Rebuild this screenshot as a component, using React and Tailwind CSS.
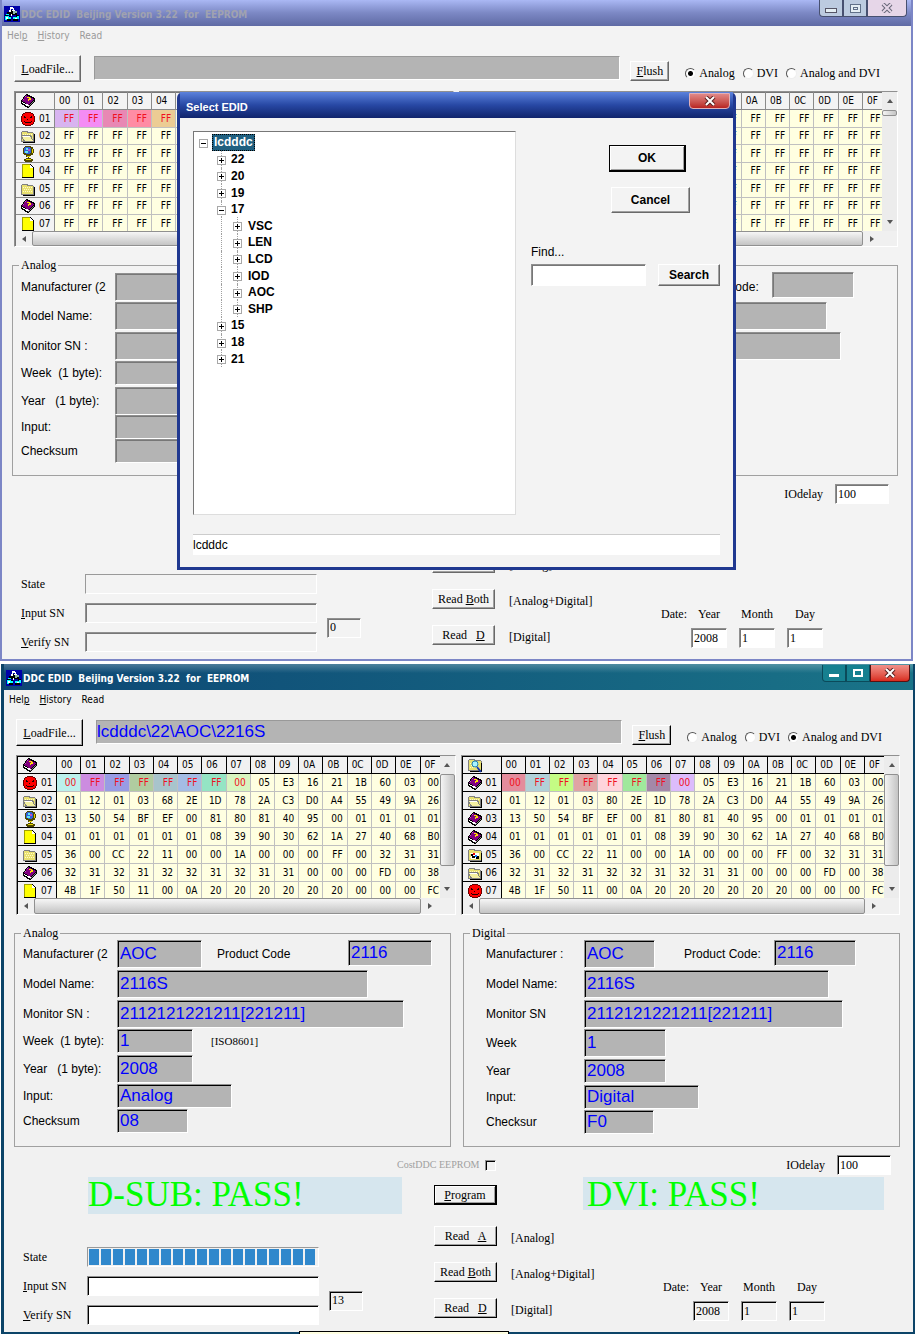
import clsx from 'clsx';

const SERIF = "font-['Liberation_Serif',serif] text-xs leading-3";
const UI = "font-['DejaVu_Sans_Condensed','DejaVu_Sans',sans-serif] text-[10px]";

const COLUMNS = ['00', '01', '02', '03', '04', '05', '06', '07', '08', '09', '0A', '0B', '0C', '0D', '0E', '0F'];

const EMPTY_ROWS = Array(7).fill(Array(16).fill('FF').join(' '));

const ANALOG_ROWS = [
    '00 FF FF FF FF FF FF 00 05 E3 16 21 1B 60 03 00',
    '01 12 01 03 68 2E 1D 78 2A C3 D0 A4 55 49 9A 26',
    '13 50 54 BF EF 00 81 80 81 40 95 00 01 01 01 01',
    '01 01 01 01 01 01 08 39 90 30 62 1A 27 40 68 B0',
    '36 00 CC 22 11 00 00 1A 00 00 00 FF 00 32 31 31',
    '32 31 32 31 32 32 31 32 31 31 00 00 00 FD 00 38',
    '4B 1F 50 11 00 0A 20 20 20 20 20 20 00 00 00 FC',
];

const DIGITAL_ROWS = ANALOG_ROWS.map((row, i) => (i === 1 ? row.replace('68', '80') : row));

/* ---------- icons ---------- */

function Svg({ children, className = 'size-4', box = '0 0 16 16' }) {
    return (
        <svg viewBox={box} className={clsx('block shrink-0', className)} shapeRendering="crispEdges" aria-hidden="true">
            {children}
        </svg>
    );
}

function AppIcon() {
    return (
        <Svg>
            <rect width="16" height="16" fill="#0000a8" />
            <path d="M6 4h4v2h3v3h2v3h-3V9H4v3H1V9h2V6h3z" fill="#000" />
            <path d="M6 1h3v1h1v2H9V3H7v1H6zM5 4h2v2H5zM8 4h3v1H8z" fill="#fff" />
            <path d="M9 5h4v2h-2v1H9z" fill="#8fb8a8" />
            <path d="M2 8h3v1H2zM1 10h4v1h2v2H5v1H1zM9 11h4v-1h2v3h-2v1H9z" fill="#0ff" />
            <path d="M2 11h2v2H2zM11 12h2v1h-2zM7 8h1v2H7z" fill="#fff" />
            <path d="M3 13h4v2H3zM9 13h5v2H9zM5 10h2v1H5z" fill="#000" />
        </Svg>
    );
}

function Book() {
    return (
        <Svg>
            <path d="M6 1h1l8 4v3l-6 7H8L1 11V8z" fill="#000" />
            <path d="M6 2l8 4-5 6-7-4z" fill="#800080" />
            <path d="M9 12l5-5v1l-5 6-7-4V9z" fill="#fff" />
            <path d="M8 13h1l5-6v1l-5 6H8z" fill="#808080" />
            <path d="M7 4h3v1h1v2H9v1H8V6h1V5H7z" fill="#ffe000" />
            <path d="M5 3h1v1H5zM3 6h1v1H3z" fill="#c060c0" />
        </Svg>
    );
}

function Face() {
    return (
        <Svg>
            <path d="M5 1h6v1h2v1h1v2h1v6h-1v2h-1v1h-2v1H5v-1H3v-1H2v-2H1V5h1V3h1V2h2z" fill="#600" />
            <path d="M5 2h6v1h2v2h1v6h-1v2h-2v1H5v-1H3v-2H2V5h1V3h2z" fill="#f00" />
            <path d="M4 5h1v1h1v1H4zM10 6h1V5h1v2h-2zM7 8h1v1H7zM5 11h6v1H5zM4 10h1v1H4zM11 10h1v1h-1z" fill="#200" />
        </Svg>
    );
}

function Folder({ open, badge }) {
    return (
        <Svg>
            <path d={badge ? 'M2 2h5l1 1h6v1h1v10H1V3h1z' : 'M2 3h5l1 1h5v1h1v9H1V4h1z'} fill="#808080" />
            <path d={badge ? 'M2 3h5v1h7v9H2z' : 'M2 4h5v1h6v8H2z'} fill="#e8e070" />
            <path d="M3 6h1v1H3zM5 6h1v1H5zM7 6h1v1H7zM9 6h1v1H9zM11 6h1v1h-1zM4 8h1v1H4zM6 8h1v1H6zM8 8h1v1H8zM10 8h1v1h-1zM3 10h1v1H3zM5 10h1v1H5zM7 10h1v1H7zM9 10h1v1H9zM11 10h1v1h-1z" fill="#fffbc8" />
            <path d="M14 6h1v9H3v-1h11z" fill="#000" />
            {open && (
                <>
                    <path d="M1 7h10l3 7H4z" fill="#808080" />
                    <path d="M2 8h8l3 5H5z" fill="#f4f0a0" />
                    <path d="M2 8h8v1H3z" fill="#fff" />
                </>
            )}
            {badge === 'find' && (
                <g shapeRendering="auto">
                    <circle cx="8" cy="7" r="3" fill="#a8f4ff" stroke="#2080b0" />
                    <path d="M10 10l4 5" stroke="#1838a8" strokeWidth="2" />
                </g>
            )}
            {badge === 'picture' && (
                <>
                    <path d="M4 6h8v6H4z" fill="#fff" />
                    <path d="M4 7h2v2h2v2H5zM9 9h3v3H9z" fill="#000" />
                    <path d="M6 6h2v2H6z" fill="#e00" />
                    <path d="M8 8h2v2H8z" fill="#0080ff" />
                </>
            )}
        </Svg>
    );
}

function Globe() {
    return (
        <Svg>
            <path d="M5 0h6v1h2v2h1v4h-1v2h-2v1h-1v1H9v1h2v1h2v2h-1v1H5v-1H4v-2h2v-1h2v-1H6V9H4V8H3V2h1V1h1z" fill="#504800" />
            <path d="M6 13h5v1H6zM12 3h1v4h-1zM7 10h3v1H7z" fill="#e8d800" />
            <path d="M5 1h5v1h1v5h-1v1H6V7H4V2h1z" fill="#3060d8" />
            <path d="M6 2h2v2H6zM5 5h3v2H5z" fill="#60e8f0" />
            <path d="M8 3h2v2H8z" fill="#c050c0" />
        </Svg>
    );
}

function Page() {
    return (
        <Svg>
            <path d="M2 1h9v1h1v1h1v1h1v11H2z" fill="#000" />
            <path d="M2 1h8v4h3v9H2z" fill="#ff0" />
            <path d="M10 2h1v1h1v1h1v1h-3z" fill="#fff" />
            <path d="M2 1h1v13H2zM2 1h8v1H2z" fill="#a0a000" />
        </Svg>
    );
}

const ANALOG_ICONS = [
    <Book />, <Face />, <Folder open />, <Globe />, <Page />, <Folder />, <Book />, <Page />,
];
const DIGITAL_ICONS = [
    <Folder badge="find" />, <Book />, <Folder open />, <Book />, <Book />, <Folder badge="picture" />, <Folder open />, <Face />,
];

/* ---------- basic controls ---------- */

function BevelButton({ dim, strong, className, children }) {
    return (
        <button
            type="button"
            className={clsx(
                'shrink-0 whitespace-pre text-center',
                strong
                    ? 'border-t border-r-2 border-b-2 border-l border-black shadow-[inset_1px_1px_#fff,inset_-1px_-1px_#a0a0a0]'
                    : 'border border-t-white border-l-white shadow-[inset_-1px_-1px_#a0a0a0]',
                !strong && (dim ? 'border-r-[#696969] border-b-[#696969]' : 'border-r-black border-b-black'),
                className
            )}
        >
            {children}
        </button>
    );
}

function sunken(dim) {
    return clsx(
        'rounded-none border border-t-[#909090] border-l-[#909090] border-r-white border-b-white outline-none',
        dim ? 'shadow-[inset_1px_1px_#777]' : 'shadow-[inset_1px_1px_#000]'
    );
}

function CloseGlyph({ stroke = '#fff', outline = '#5a2020' }) {
    return (
        <svg viewBox="0 0 12 10" className="h-[10px] w-3" aria-hidden="true">
            <path d="M2 1l8 8M10 1l-8 8" stroke={outline} strokeWidth="4" />
            <path d="M2 1l8 8M10 1l-8 8" stroke={stroke} strokeWidth="2" />
        </svg>
    );
}

function TitleBar({ dim }) {
    const box = 'flex h-[17px] items-center justify-center border border-t-0';
    return (
        <header
            className={clsx(
                'flex h-[26px] items-start pl-[2px]',
                dim
                    ? 'bg-linear-to-b from-[#aab8f4] via-[#7c88c4] to-[#5f6aa4] text-[#a0a2b0]'
                    : 'bg-[linear-gradient(to_bottom,#ffffff40,#ffffff00_35%),linear-gradient(to_right,#0d4674,#1a7488)] text-white'
            )}
        >
            <div className="flex h-full flex-1 items-center gap-px pt-[2px]">
                <AppIcon />
                <h1 className={clsx(UI, 'whitespace-pre font-bold')}>{'DDC EDID  Beijing Version 3.22  for  EEPROM'}</h1>
            </div>
            <div className={clsx('flex', dim ? 'mr-1' : 'mr-[3px] pt-px')}>
                <button
                    type="button"
                    aria-label="Minimize"
                    className={clsx(box, 'w-6 rounded-bl', dim ? 'border-[#475070] bg-[#bccbe0]' : 'border-[#0b4a5a] bg-[#168090]')}
                >
                    <span className={clsx('mt-1', dim ? 'h-[5px] w-3 border border-[#556] bg-[#e4eef4]' : 'h-[3px] w-[10px] bg-white')} />
                </button>
                <button
                    type="button"
                    aria-label="Maximize"
                    className={clsx(box, 'w-6', dim ? 'border-[#475070] bg-[#bccbe0]' : 'border-[#0b4a5a] bg-[#168090]')}
                >
                    {dim ? (
                        <span className="flex h-[9px] w-[11px] items-center justify-center border border-[#607088] bg-[#e4eef4]">
                            <span className="h-[3px] w-[5px] border border-[#607088]" />
                        </span>
                    ) : (
                        <span className="h-2 w-[10px] border-2 border-white" />
                    )}
                </button>
                <button
                    type="button"
                    aria-label="Close"
                    className={clsx(
                        box,
                        'w-10 rounded-br',
                        dim ? 'border-[#475070] bg-[#e6d6e8]' : 'border-[#5a1010] bg-linear-to-b from-[#f0908a] to-[#d8281c]'
                    )}
                >
                    {dim ? <CloseGlyph outline="#667" stroke="#e6d6e8" /> : <CloseGlyph />}
                </button>
            </div>
        </header>
    );
}

/* ---------- hex grid ---------- */

function Arrow({ label, points, className }) {
    return (
        <button type="button" aria-label={label} className={clsx('flex items-center justify-center', className)}>
            <svg viewBox="0 0 8 8" className="size-2" aria-hidden="true">
                <polygon points={points} fill="#555" />
            </svg>
        </button>
    );
}

function HexGrid({ name, rows, icons, tints, dim }) {
    const line = dim ? 'border-[#8a8a8a]' : 'border-black';
    return (
        <section aria-label={name} className={clsx('min-w-0 flex-1 pl-px', sunken(dim))}>
            <div className="flex">
                <div className={clsx('min-w-0 flex-1 overflow-hidden', dim ? 'h-[139px]' : 'h-[142px]')}>
                    <table className={clsx(UI, 'w-full table-fixed border-separate border-spacing-0 leading-4')}>
                        <thead>
                            <tr className="h-[18px]">
                                <th className={clsx('w-[39px] border-r border-b pl-1', line)}>{icons[0]}</th>
                                {COLUMNS.map((col) => (
                                    <th
                                        key={col}
                                        className={clsx(
                                            'border-b pl-1 text-left font-normal',
                                            col === '0F' ? 'w-[19px]' : 'border-r',
                                            line
                                        )}
                                    >
                                        {col}
                                    </th>
                                ))}
                            </tr>
                        </thead>
                        <tbody>
                            {rows.map((row, r) => (
                                <tr key={r} className={dim ? 'odd:h-[18px] even:h-[17px]' : 'h-[18px]'}>
                                    <th className={clsx('border-r border-b pl-1 font-normal', line)}>
                                        <div className="flex h-4 items-center gap-[3px]">
                                            {icons[r + 1]}
                                            {'0' + (r + 1)}
                                        </div>
                                    </th>
                                    {row.split(' ').map((byte, c) => {
                                        const tint = r === 0 ? tints[c] : undefined;
                                        return (
                                            <td
                                                key={c}
                                                className={clsx(
                                                    'border-b border-[#c0c0c0]',
                                                    c === 15 ? 'pl-[7px]' : 'border-r pr-1 text-right',
                                                    tint ? [tint, 'text-[#f01020]'] : 'bg-[#ffffe1]'
                                                )}
                                            >
                                                {byte}
                                            </td>
                                        );
                                    })}
                                </tr>
                            ))}
                        </tbody>
                    </table>
                </div>
                <div className="flex w-[15px] flex-col bg-[#ececec]">
                    <Arrow label="Scroll up" points="4,2 7,6 1,6" className="h-[18px]" />
                    <div
                        className={clsx(
                            'rounded-xs border border-[#909090] bg-linear-to-r from-[#f4f4f4] to-[#c4c4c4]',
                            dim ? 'h-[6px]' : 'h-[92px]'
                        )}
                    />
                    <Arrow label="Scroll down" points="1,2 7,2 4,6" className="mt-auto h-[18px]" />
                </div>
            </div>
            <div className={clsx('flex bg-[#f0f0f0] pr-4', dim ? 'h-[15px]' : 'h-4')}>
                <Arrow label="Scroll left" points="6,1 6,7 2,4" className="w-4" />
                <div className="flex-1 rounded-xs border border-[#909090] bg-linear-to-b from-[#f6f6f6] to-[#c4c4c4]" />
                <Arrow label="Scroll right" points="2,1 2,7 6,4" className="w-[18px]" />
            </div>
        </section>
    );
}

/* ---------- field groups ---------- */

const ANALOG_FIELDS = [
    { label: 'Manufacturer (2', key: 'maker', box: 'h-7 w-[85px]' },
    { label: 'Model Name:', key: 'model', box: 'h-7 w-[251px]' },
    { label: 'Monitor SN :', key: 'serial', box: 'h-7 w-[287px]' },
    { label: 'Week  (1 byte):', key: 'week', box: 'h-6 w-[76px]' },
    { label: 'Year   (1 byte):', key: 'year', box: 'h-7 w-[76px]' },
    { label: 'Input:', key: 'input', box: 'h-6 w-[115px]' },
    { label: 'Checksum', key: 'checksum', box: 'h-6 w-[71px]' },
];

const DIGITAL_FIELDS = [
    { label: 'Manufacturer :', key: 'maker', box: 'h-7 w-[71px]' },
    { label: 'Model Name:', key: 'model', box: 'h-7 w-[245px]' },
    { label: 'Monitor SN', key: 'serial', box: 'h-7 w-[259px]' },
    { label: 'Week', key: 'week', box: 'h-7 w-[82px]' },
    { label: 'Year', key: 'year', box: 'h-6 w-[82px]' },
    { label: 'Input:', key: 'input', box: 'h-6 w-[115px]' },
    { label: 'Checksur', key: 'checksum', box: 'h-6 w-[70px]' },
];

const ANALOG_HEIGHTS = ['h-[30px]', 'h-[30px]', 'h-[29px]', 'h-[26px]', 'h-[29px]', 'h-[25px]', 'h-[25px]'];
const ANALOG_HEIGHTS_DIM = ['h-[29px]', 'h-[30px]', 'h-[29px]', 'h-[26px]', 'h-[29px]', 'h-6', 'h-6'];
const DIGITAL_HEIGHTS = ['h-[30px]', 'h-[30px]', 'h-[29px]', 'h-[30px]', 'h-[26px]', 'h-[25px]', 'h-[26px]'];

function FieldGroup({ id, title, fields, heights, values, digital, dim }) {
    const valueBox = clsx('bg-[#b4b4b4] pl-[2px] text-[17px] leading-5 text-[#0000ff]', sunken(dim));
    return (
        <fieldset
            className={clsx(
                'min-w-0 border border-[#a0a0a0] text-xs',
                digital ? 'pl-[22px]' : 'pl-2',
                dim ? 'pt-px pb-3' : 'pb-[11px]'
            )}
        >
            <legend className={clsx(SERIF, 'px-[2px]', digital ? '-ml-4' : '-ml-[2px]')}>{title}</legend>
            {fields.map((field, i) => (
                <div key={field.key} className={clsx('flex items-center', heights[i])}>
                    <label htmlFor={`${id}-${field.key}`} className={clsx('shrink-0 whitespace-pre', digital ? 'w-[98px]' : 'w-[94px]')}>
                        {field.label}
                    </label>
                    <input
                        id={`${id}-${field.key}`}
                        readOnly
                        value={values[field.key] ?? ''}
                        className={clsx(valueBox, field.box)}
                    />
                    {field.key === 'maker' && (
                        <>
                            <label
                                htmlFor={`${id}-product`}
                                className={clsx('shrink-0', digital ? 'ml-[29px] w-[90px]' : 'ml-[15px] w-[131px]')}
                            >
                                {digital ? 'Product Code:' : 'Product Code'}
                            </label>
                            <input
                                id={`${id}-product`}
                                readOnly
                                value={values.product ?? ''}
                                className={clsx(valueBox, 'mb-[3px] h-[26px]', digital ? 'w-[82px]' : 'w-[84px]')}
                            />
                        </>
                    )}
                    {field.key === 'week' && !digital && (
                        <span className="ml-[18px] font-['Liberation_Serif',serif] text-[11px]">[ISO8601]</span>
                    )}
                </div>
            ))}
        </fieldset>
    );
}

/* ---------- main window ---------- */

function ModeRadio({ id, label, checked }) {
    return (
        <label className="flex items-center gap-[3px] whitespace-nowrap">
            <input
                type="radio"
                name={`${id}-mode`}
                defaultChecked={checked}
                className="size-[11px] appearance-none rounded-full border border-t-[#555] border-r-[#eee] border-b-[#eee] border-l-[#555] bg-white checked:bg-[radial-gradient(circle,#000_2px,#fff_3px)]"
            />
            {label}
        </label>
    );
}

function DateField({ id, label, value, dim }) {
    return (
        <div className="flex w-9 flex-col items-center gap-2">
            <label htmlFor={id}>{label}</label>
            <input
                id={id}
                defaultValue={value}
                className={clsx('h-5 w-full pl-[2px] text-xs', dim ? 'bg-white' : 'bg-transparent', sunken(dim))}
            />
        </div>
    );
}

function ReadButton({ dim, prefix, hotkey, suffix, note }) {
    return (
        <div className="flex items-center gap-[14px]">
            <BevelButton dim={dim} className="h-5 w-[63px]">
                {prefix}<u>{hotkey}</u>{suffix}
            </BevelButton>
            <span className="whitespace-nowrap pt-1">{note}</span>
        </div>
    );
}

function ProgrammerWindow({ id, dim, file, mode, analog, digital, count, result, children }) {
    const edit = clsx('h-5', sunken(dim));
    return (
        <main
            className={clsx(
                'relative text-black',
                dim
                    ? 'mr-[3px] border-x-2 border-b-2 border-[#7c86c6] bg-[#f3f3f3]'
                    : 'mt-[3px] mr-px ml-px border-r-2 border-b-2 border-l-[3px] border-[#0c4468] bg-[#f1f1f1]'
            )}
        >
            <TitleBar dim={dim} />
            <nav className={clsx(UI, 'flex h-[18px] items-center gap-[10px] pl-[5px]', dim && 'text-[#9a9a9a]')}>
                <button type="button">Hel<u>p</u></button>
                <button type="button"><u>H</u>istory</button>
                <button type="button">Read</button>
            </nav>

            {/* Toolbar */}
            <div className={clsx(SERIF, 'flex items-end pt-[11px] pr-[31px] pl-3')}>
                <BevelButton dim={dim} className="h-[27px] w-[67px]">
                    <u>L</u>oadFile...
                </BevelButton>
                <input
                    readOnly
                    aria-label="EDID file"
                    value={file}
                    className="mb-[2px] ml-[13px] h-6 min-w-0 flex-1 border border-t-[#999] border-r-white border-b-white border-l-[#999] bg-[#b4b4b4] font-['Liberation_Sans',sans-serif] text-[17px] leading-5 text-[#0000ff] outline-none"
                />
                <BevelButton dim={dim} className="mb-px ml-[10px] h-5 w-[39px]">
                    <u>F</u>lush
                </BevelButton>
                <div className="mb-[3px] ml-4 flex gap-2">
                    <ModeRadio id={id} label="Analog" checked={mode === 'analog'} />
                    <ModeRadio id={id} label="DVI" />
                    <ModeRadio id={id} label="Analog and DVI" checked={mode === 'both'} />
                </div>
            </div>

            <div className="flex gap-[5px] pt-[9px] pr-[13px] pl-3">
                <HexGrid name="Analog data" rows={analog.rows} icons={ANALOG_ICONS} tints={analog.tints} dim={dim} />
                <HexGrid name="Digital data" rows={digital.rows} icons={DIGITAL_ICONS} tints={digital.tints} dim={dim} />
            </div>

            <div className="grid grid-cols-2 gap-3 pt-3 pr-[13px] pl-[10px]">
                <FieldGroup
                    id={`${id}-analog`}
                    title="Analog"
                    fields={ANALOG_FIELDS}
                    heights={dim ? ANALOG_HEIGHTS_DIM : ANALOG_HEIGHTS}
                    values={analog.values}
                    dim={dim}
                />
                <FieldGroup
                    id={`${id}-digital`}
                    title="Digital"
                    fields={DIGITAL_FIELDS}
                    heights={dim ? ANALOG_HEIGHTS_DIM : DIGITAL_HEIGHTS}
                    values={digital.values}
                    digital
                    dim={dim}
                />
            </div>

            <div className={clsx(SERIF, 'flex h-[30px] items-center justify-between pt-[6px] pr-[22px] pl-[393px]')}>
                <label className="flex items-center gap-[5px] text-[10px] text-[#a0a0a0]">
                    CostDDC EEPROM
                    <input type="checkbox" className={clsx('size-[11px] appearance-none', sunken(dim))} />
                </label>
                <label className="flex items-center gap-3">
                    IOdelay
                    <input defaultValue="100" className={clsx(edit, 'w-[54px] bg-white pl-[2px]')} />
                </label>
            </div>

            <div className={clsx(SERIF, 'flex h-[37px] items-start pr-[29px] pl-[84px]')}>
                <output className={clsx('h-[37px] w-[314px] text-[35px] leading-9 text-[#00ff00]', result && 'bg-[#d6e6ee]')}>
                    {result && 'D-SUB: PASS!'}
                </output>
                <BevelButton dim={dim} strong className="mt-2 ml-8 h-5 w-[63px]">
                    <u>P</u>rogram
                </BevelButton>
                <output className={clsx('ml-[86px] h-[33px] flex-1 pl-1 text-[35px] leading-9 text-[#00ff00]', result && 'bg-[#d6e6ee]')}>
                    {result && 'DVI: PASS!'}
                </output>
            </div>

            <div className={clsx(SERIF, 'flex items-start pr-[88px] pb-[7px] pl-[19px]', dim ? 'pt-[10px]' : 'pt-3')}>
                <div className="flex flex-col gap-[9px] pt-[21px]">
                    <div className="flex items-center">
                        <span className="w-16">State</span>
                        <div
                            role="progressbar"
                            aria-label="State"
                            aria-valuenow={result ? 100 : 0}
                            className="flex h-5 w-[232px] gap-[2px] border border-t-[#999] border-r-white border-b-white border-l-[#999] p-px"
                        >
                            {result && Array.from({ length: 19 }, (_, i) => <span key={i} className="w-[10px] bg-[#3088cc]" />)}
                        </div>
                    </div>
                    <div className="flex items-center gap-[10px]">
                        <div className="flex flex-col gap-[9px]">
                            <label className="flex items-center">
                                <span className="w-16"><u>I</u>nput SN</span>
                                <input className={clsx(edit, 'w-[232px]', dim ? 'bg-transparent' : 'bg-white')} />
                            </label>
                            <label className="flex items-center">
                                <span className="w-16"><u>V</u>erify SN</span>
                                <input className={clsx(edit, 'w-[232px]', dim ? 'bg-transparent' : 'bg-white')} />
                            </label>
                        </div>
                        <input readOnly aria-label="Length" value={count} className={clsx(edit, 'w-[34px] bg-transparent pl-[2px]')} />
                    </div>
                </div>

                <div className="ml-[71px] flex flex-col gap-4">
                    <ReadButton dim={dim} prefix="Read   " hotkey="A" note="[Analog]" />
                    <ReadButton dim={dim} prefix="Read " hotkey="B" suffix="oth" note="[Analog+Digital]" />
                    <ReadButton dim={dim} prefix="Read   " hotkey="D" note="[Digital]" />
                </div>

                <div className="ml-auto flex gap-3 pt-[55px]">
                    <span className="-mr-2">Date:</span>
                    <DateField id={`${id}-year`} label="Year" value="2008" dim={dim} />
                    <DateField id={`${id}-month`} label="Month" value="1" dim={dim} />
                    <DateField id={`${id}-day`} label="Day" value="1" dim={dim} />
                </div>
            </div>
            {children}
        </main>
    );
}

/* ---------- dialog ---------- */

const TREE = [
    { text: 'lcdddc', level: 0, open: true, selected: true },
    { text: '22', level: 1 },
    { text: '20', level: 1 },
    { text: '19', level: 1 },
    { text: '17', level: 1, open: true },
    { text: 'VSC', level: 2 },
    { text: 'LEN', level: 2 },
    { text: 'LCD', level: 2 },
    { text: 'IOD', level: 2 },
    { text: 'AOC', level: 2 },
    { text: 'SHP', level: 2 },
    { text: '15', level: 1 },
    { text: '18', level: 1 },
    { text: '21', level: 1 },
];

const INDENT = ['pl-[5px]', 'pl-[23px]', 'pl-[39px]'];

function TreeItem({ text, level, open, selected }) {
    return (
        <li role="treeitem" aria-expanded={!!open} aria-selected={!!selected} className={clsx('relative flex flex-1 items-center', INDENT[level])}>
            {level > 0 && <span className="absolute inset-y-0 left-[27px] border-l border-dotted border-[#a0a0a0]" />}
            {level > 1 && <span className="absolute inset-y-0 left-[43px] border-l border-dotted border-[#a0a0a0]" />}
            <svg viewBox="0 0 9 9" className="relative mt-[2px] size-[9px]" shapeRendering="crispEdges" aria-hidden="true">
                <rect x="0.5" y="0.5" width="8" height="8" fill="#fff" stroke="#a8a8a8" />
                <path d={open ? 'M2 4h5v1H2z' : 'M2 4h5v1H2zM4 2h1v5H4z'} fill="#000" />
            </svg>
            <span
                className={clsx(
                    selected
                        ? 'ml-1 border border-dotted border-black bg-[#206080] px-px leading-[15px] text-white'
                        : ['leading-4', level === 1 ? 'ml-[5px]' : 'ml-[6px]']
                )}
            >
                {text}
            </span>
        </li>
    );
}

function SelectDialog() {
    return (
        <div
            role="dialog"
            aria-labelledby="select-title"
            className="absolute top-[92px] right-[175px] left-[175px] rounded-t-md border-x-[3px] border-b-[3px] border-[#203890] bg-[#f3f3f3]"
        >
            <div className="flex h-[26px] items-start bg-linear-to-b from-[#5c82dc] via-[#2848a4] to-[#10246c] pl-[6px]">
                <h2 id="select-title" className="flex-1 pt-[8px] text-[11px] leading-[15px] font-bold text-white">
                    Select EDID
                </h2>
                <button
                    type="button"
                    aria-label="Close dialog"
                    className="mt-px mr-[3px] flex h-4 w-[41px] items-center justify-center rounded-b border border-[#e0b0b8] bg-linear-to-b from-[#e08888] to-[#b82020]"
                >
                    <CloseGlyph />
                </button>
            </div>
            <div className="px-[13px] pt-[13px] pb-3">
                <div className="flex gap-[15px]">
                    <div className="h-96 flex-1 border border-t-[#777] border-r-[#ddd] border-b-[#ddd] border-l-[#777] bg-white pt-[2px]">
                        <ul role="tree" className="flex h-[233px] flex-col text-xs font-bold">
                            {TREE.map((item) => (
                                <TreeItem key={item.text} {...item} />
                            ))}
                        </ul>
                    </div>
                    <div className="flex w-[189px] flex-col text-xs">
                        <BevelButton dim strong className="mt-[14px] ml-[78px] h-[27px] w-[77px] font-bold">
                            OK
                        </BevelButton>
                        <BevelButton dim className="mt-[15px] ml-20 h-[26px] w-[79px] font-bold">
                            Cancel
                        </BevelButton>
                        <label htmlFor="find" className="mt-[31px] leading-4">Find...</label>
                        <div className="mt-1 flex justify-between">
                            <input id="find" className={clsx('h-[22px] w-[115px] bg-white', sunken(true))} />
                            <BevelButton dim className="h-[22px] w-[62px] font-bold">Search</BevelButton>
                        </div>
                    </div>
                </div>
                <input
                    aria-label="Selected path"
                    defaultValue="lcdddc"
                    className="mt-[19px] block h-[21px] w-full border-t border-[#ccc] bg-white text-xs outline-none"
                />
            </div>
        </div>
    );
}

export default function App() {
    return (
        <div className="relative bg-white font-['Liberation_Sans',sans-serif]">
            <ProgrammerWindow
                id="idle"
                dim
                file=""
                mode="analog"
                count="0"
                analog={{
                    rows: EMPTY_ROWS,
                    values: {},
                    tints: ['bg-[#d8b4f0]', 'bg-[#f48cf4]', 'bg-[#e888b4]', 'bg-[#ff8ca4]', 'bg-[#eccc94]'],
                }}
                digital={{ rows: EMPTY_ROWS, values: {}, tints: [] }}
            >
                <SelectDialog />
            </ProgrammerWindow>

            <ProgrammerWindow
                id="done"
                file="lcdddc\22\AOC\2216S"
                mode="both"
                count="13"
                result
                analog={{
                    rows: ANALOG_ROWS,
                    values: {
                        maker: 'AOC', product: '2116', model: '2116S', serial: '2112121221211[221211]',
                        week: '1', year: '2008', input: 'Analog', checksum: '08',
                    },
                    tints: [
                        'bg-[#bcf0ec]', 'bg-[#cc8ce0]', 'bg-[#989ce4]', 'bg-[#b0cca0]',
                        'bg-[#a8c4cc]', 'bg-[#a4bce4]', 'bg-[#94e4c4]', 'bg-[#d8f4c0]',
                    ],
                }}
                digital={{
                    rows: DIGITAL_ROWS,
                    values: {
                        maker: 'AOC', product: '2116', model: '2116S', serial: '2112121221211[221211]',
                        week: '1', year: '2008', input: 'Digital', checksum: 'F0',
                    },
                    tints: [
                        'bg-[#e48c9c]', 'bg-[#b0d0d8]', 'bg-[#c4fc84]', 'bg-[#e0a4a4]',
                        'bg-[#ffd4dc]', 'bg-[#a0e89c]', 'bg-[#a488a8]', 'bg-[#dcbcfc]',
                    ],
                }}
            />

            {/* Edge of a tooltip rising from below */}
            <div className="absolute bottom-0 left-[299px] h-[3px] w-[210px] border border-b-0 border-black bg-[#ffffe1]" />
        </div>
    );
}
